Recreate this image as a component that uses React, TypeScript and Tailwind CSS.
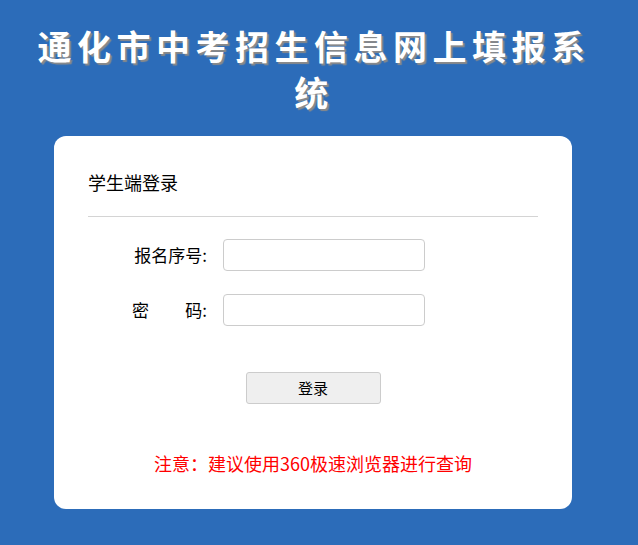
import React from "react";

const cn = "font-['Microsoft_YaHei','Noto_Sans_CJK_SC','Noto_Sans',sans-serif]";

function Field({ label, type = "text" }: { label: React.ReactNode; type?: string }) {
  return (
    <div className="flex items-center">
      <div className="flex w-[119px] justify-end text-[17px] leading-[24px] text-black">{label}</div>
      <input
        type={type}
        className="ml-[16px] h-[32px] w-[202px] rounded-[4px] border border-[#cccccc] bg-white px-2 text-[14px] outline-none"
      />
    </div>
  );
}

export default function App() {
  return (
    <div className={`min-h-[545px] w-full bg-[#2c6cb9] pb-10 ${cn}`}>
      <h1 className="ml-[29px] w-[570px] pt-[23px] text-center text-[34px] font-bold leading-[46px] tracking-[5.5px] text-white [text-shadow:2px_2px_1px_#8a8a8a]">
        通化市中考招生信息网上填报系统
      </h1>
      <div className="ml-[54px] mt-[21px] w-[518px] rounded-[12px] bg-white px-[34px] pb-[34px] pt-[34px]">
        <div className="border-b border-[#d4d4d4] pb-[22px] text-[18px] leading-[24px] text-black">学生端登录</div>
        <div className="mt-[22px] flex flex-col gap-[23px]">
          <Field label={<span>报名序号:</span>} />
          <Field
            type="password"
            label={
              <span className="flex w-[75px] justify-between">
                <span>密</span>
                <span>码:</span>
              </span>
            }
          />
        </div>
        <div className="mt-[46px] flex justify-center">
          <button className="h-[32px] w-[135px] rounded-[3px] border border-[#cccccc] bg-[#efefef] text-[15px] text-black">
            登录
          </button>
        </div>
        <p className="mt-[47px] text-center text-[18px] leading-[24px] text-[#ff0000]">
          注意：建议使用360极速浏览器进行查询
        </p>
      </div>
    </div>
  );
}
